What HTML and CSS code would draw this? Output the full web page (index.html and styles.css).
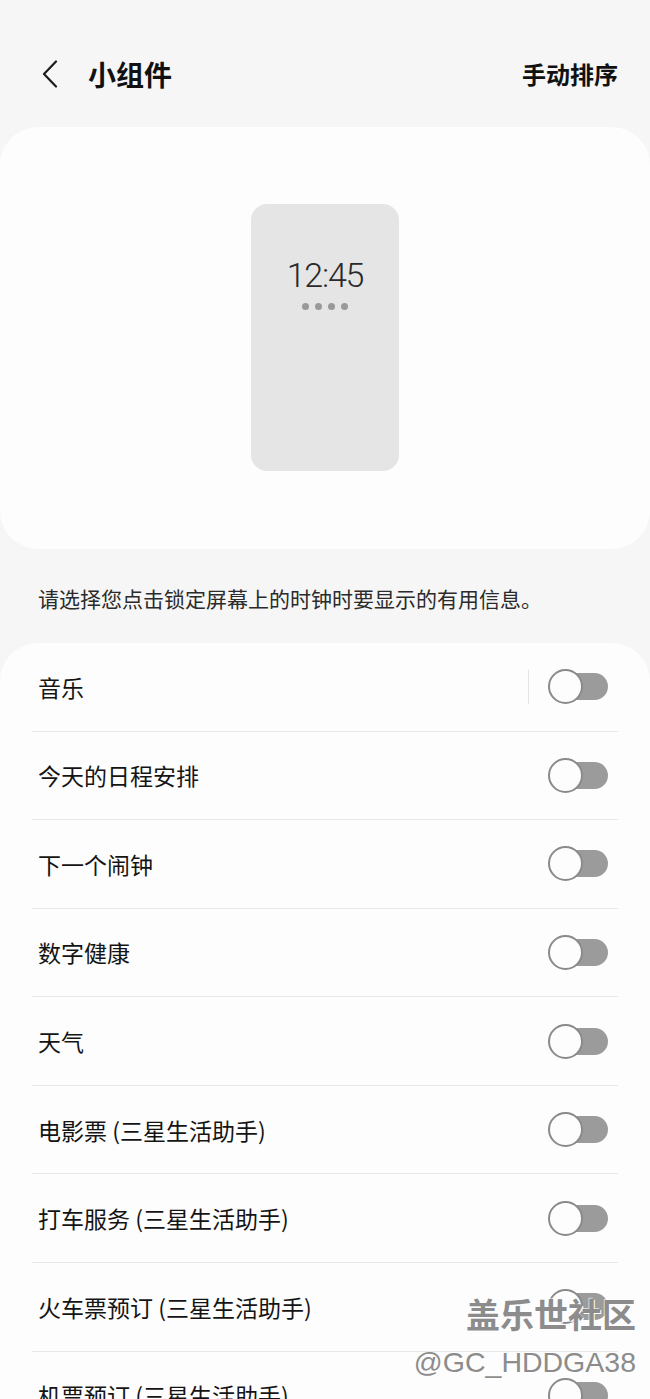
FILE: index.html
```html
<!DOCTYPE html>
<html lang="zh-CN">
<head>
<meta charset="utf-8">
<title>小组件</title>
<link rel="stylesheet" href="styles.css">
</head>
<body>
<div class="page">
  <header class="header">
    <div class="header-left">
      <svg class="back" width="17" height="28" viewBox="0 0 17 28"><polyline points="15,1.5 3,14 15,26.5" fill="none" stroke="#1c1c1c" stroke-width="2.2" stroke-linecap="round" stroke-linejoin="round"/></svg>
      <h1 class="title">小组件</h1>
    </div>
    <div class="action">手动排序</div>
  </header>

  <section class="preview-card">
    <div class="phone">
      <div class="time">12:45</div>
      <div class="dots"><span></span><span></span><span></span><span></span></div>
    </div>
  </section>

  <p class="desc">请选择您点击锁定屏幕上的时钟时要显示的有用信息。</p>

  <section class="list-card">
    <div class="row"><span class="label">音乐</span><div class="right"><span class="vsep"></span><div class="toggle"><span class="track"></span><span class="thumb"></span></div></div></div>
    <div class="row"><span class="label">今天的日程安排</span><div class="right"><div class="toggle"><span class="track"></span><span class="thumb"></span></div></div></div>
    <div class="row"><span class="label">下一个闹钟</span><div class="right"><div class="toggle"><span class="track"></span><span class="thumb"></span></div></div></div>
    <div class="row"><span class="label">数字健康</span><div class="right"><div class="toggle"><span class="track"></span><span class="thumb"></span></div></div></div>
    <div class="row"><span class="label">天气</span><div class="right"><div class="toggle"><span class="track"></span><span class="thumb"></span></div></div></div>
    <div class="row"><span class="label">电影票 (三星生活助手)</span><div class="right"><div class="toggle"><span class="track"></span><span class="thumb"></span></div></div></div>
    <div class="row"><span class="label">打车服务 (三星生活助手)</span><div class="right"><div class="toggle"><span class="track"></span><span class="thumb"></span></div></div></div>
    <div class="row"><span class="label">火车票预订 (三星生活助手)</span><div class="right"><div class="toggle"><span class="track"></span><span class="thumb"></span></div></div></div>
    <div class="row"><span class="label">机票预订 (三星生活助手)</span><div class="right"><div class="toggle"><span class="track"></span><span class="thumb"></span></div></div></div>
  </section>

  <div class="watermark">
    <div class="wm-brand">盖乐世社区</div>
    <div class="wm-user">@GC_HDDGA38</div>
  </div>
</div>
</body>
</html>
```

FILE: styles.css
```css
html, body {
  margin: 0;
  padding: 0;
  background: #f6f6f6;
}

body {
  font-family: "Noto Sans CJK SC", "Noto Sans", Roboto, sans-serif;
  color: #111;
}

.page {
  position: relative;
  width: 650px;
  height: 1399px;
  overflow: hidden;
}

.header {
  display: flex;
  align-items: center;
  justify-content: space-between;
  height: 52px;
  padding: 48px 32px 0 41px;
  margin-bottom: 27px;
}

.header-left {
  display: flex;
  align-items: center;
}

.back {
  display: block;
  margin-right: 30px;
}

.title {
  margin: 0;
  font-size: 28px;
  font-weight: 700;
  line-height: 40px;
  color: #111;
}

.action {
  font-size: 24px;
  font-weight: 700;
  line-height: 34px;
  color: #111;
}

.preview-card {
  background: #fdfdfd;
  border-radius: 38px;
  padding: 77px 0 78px;
  display: flex;
  justify-content: center;
}

.phone {
  width: 148px;
  height: 216px;
  padding-top: 51px;
  background: #e5e5e5;
  border-radius: 16px;
  display: flex;
  flex-direction: column;
  align-items: center;
}

.time {
  font-family: Roboto, "Noto Sans", sans-serif;
  font-weight: 300;
  font-size: 34px;
  line-height: 40px;
  letter-spacing: -1.2px;
  color: #2a2a2a;
}

.dots {
  display: flex;
  gap: 6px;
  margin-top: 8px;
}

.dots span {
  width: 7px;
  height: 7px;
  border-radius: 50%;
  background: #999999;
}

.desc {
  margin: 0;
  padding: 34px 38px 30px;
  font-size: 21px;
  line-height: 30px;
  color: #2b2b2b;
}

.list-card {
  background: #fdfdfd;
  border-radius: 38px;
  padding: 0 32px;
}

.row {
  box-sizing: border-box;
  height: 88.57px;
  display: flex;
  align-items: center;
  justify-content: space-between;
  padding: 0 10px 0 6px;
  border-bottom: 1px solid #e8e8e8;
}

.label {
  font-size: 23px;
  line-height: 32px;
  color: #141414;
}

.right {
  display: flex;
  align-items: center;
}

.vsep {
  width: 1px;
  height: 34px;
  background: #e4e4e4;
  margin-right: 19px;
}

.toggle {
  position: relative;
  width: 60px;
  height: 35px;
}

.track {
  position: absolute;
  left: 12px;
  right: 0;
  top: 4px;
  bottom: 4px;
  background: #9b9b9b;
  border-radius: 14px;
}

.thumb {
  position: absolute;
  left: 0;
  top: 0;
  box-sizing: border-box;
  width: 35px;
  height: 35px;
  border-radius: 50%;
  background: #fdfdfd;
  border: 2px solid #8a8a8a;
}

.watermark {
  position: absolute;
  right: 14px;
  top: 1291px;
  display: flex;
  flex-direction: column;
  align-items: flex-end;
  pointer-events: none;
}

.wm-brand {
  font-size: 34px;
  font-weight: 700;
  line-height: 46px;
  color: #8c8c8c;
  text-shadow: 1px 1px 0 #ffffff, -1px -1px 0 rgba(255,255,255,0.6);
}

.wm-user {
  font-family: "Liberation Sans", Arial, sans-serif;
  font-size: 28.5px;
  line-height: 40px;
  margin-top: 5px;
  color: #8c8c8c;
  text-shadow: 1px 1px 0 #ffffff;
}
```
